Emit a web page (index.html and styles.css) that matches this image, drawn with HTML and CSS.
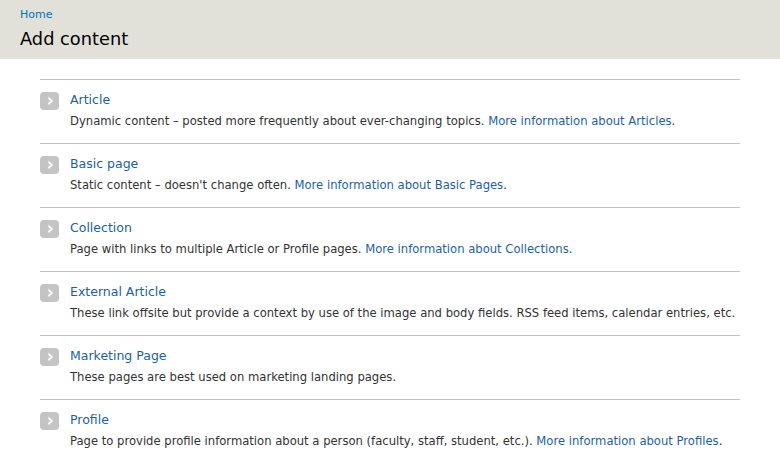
FILE: index.html
```html
<!DOCTYPE html>
<html>
<head>
<meta charset="utf-8">
<link rel="stylesheet" href="styles.css">
</head>
<body>
<header class="page-head">
  <a class="crumb" href="#">Home</a>
  <h1 class="title">Add content</h1>
</header>
<main class="content">
  <ul class="types">
    <li class="type">
      <span class="arrow"><svg width="8" height="10" viewBox="0 0 8 10"><path d="M2.5 1.8 L5.7 5 L2.5 8.2" fill="none" stroke="#fff" stroke-width="2"/></svg></span>
      <div class="info">
        <a class="name" href="#">Article</a>
        <p class="desc">Dynamic content – posted more frequently about ever-changing topics. <a href="#">More information about Articles</a>.</p>
      </div>
    </li>
    <li class="type">
      <span class="arrow"><svg width="8" height="10" viewBox="0 0 8 10"><path d="M2.5 1.8 L5.7 5 L2.5 8.2" fill="none" stroke="#fff" stroke-width="2"/></svg></span>
      <div class="info">
        <a class="name" href="#">Basic page</a>
        <p class="desc">Static content – doesn't change often. <a href="#">More information about Basic Pages</a>.</p>
      </div>
    </li>
    <li class="type">
      <span class="arrow"><svg width="8" height="10" viewBox="0 0 8 10"><path d="M2.5 1.8 L5.7 5 L2.5 8.2" fill="none" stroke="#fff" stroke-width="2"/></svg></span>
      <div class="info">
        <a class="name" href="#">Collection</a>
        <p class="desc">Page with links to multiple Article or Profile pages. <a href="#">More information about Collections</a>.</p>
      </div>
    </li>
    <li class="type">
      <span class="arrow"><svg width="8" height="10" viewBox="0 0 8 10"><path d="M2.5 1.8 L5.7 5 L2.5 8.2" fill="none" stroke="#fff" stroke-width="2"/></svg></span>
      <div class="info">
        <a class="name" href="#">External Article</a>
        <p class="desc">These link offsite but provide a context by use of the image and body fields. RSS feed items, calendar entries, etc.</p>
      </div>
    </li>
    <li class="type">
      <span class="arrow"><svg width="8" height="10" viewBox="0 0 8 10"><path d="M2.5 1.8 L5.7 5 L2.5 8.2" fill="none" stroke="#fff" stroke-width="2"/></svg></span>
      <div class="info">
        <a class="name" href="#">Marketing Page</a>
        <p class="desc">These pages are best used on marketing landing pages.</p>
      </div>
    </li>
    <li class="type">
      <span class="arrow"><svg width="8" height="10" viewBox="0 0 8 10"><path d="M2.5 1.8 L5.7 5 L2.5 8.2" fill="none" stroke="#fff" stroke-width="2"/></svg></span>
      <div class="info">
        <a class="name" href="#">Profile</a>
        <p class="desc">Page to provide profile information about a person (faculty, staff, student, etc.). <a href="#">More information about Profiles</a>.</p>
      </div>
    </li>
  </ul>
</main>
</body>
</html>
```
FILE: styles.css
```css
* { box-sizing: border-box; }
html, body { margin: 0; padding: 0; background: #fff; }
body {
  font-family: "DejaVu Sans", Verdana, sans-serif;
  color: #333;
  width: 780px;
  height: 465px;
  overflow: hidden;
}
a { color: #0074bd; text-decoration: none; }
.page-head {
  background: #e1e0d9;
  height: 59px;
  padding: 8px 20px 0;
}
.crumb {
  display: block;
  font-size: 11px;
  line-height: 13px;
  color: #0074bd;
}
.title {
  margin: 6px 0 0;
  font-size: 17.8px;
  font-weight: normal;
  color: #000;
  line-height: 24px;
}
.content { padding: 20px 40px 0; }
.types {
  list-style: none;
  margin: 0;
  padding: 0;
  border-top: 1px solid #bfbfbf;
}
.type {
  display: flex;
  gap: 11px;
  height: 64px;
  padding-top: 11px;
  border-bottom: 1px solid #bfbfbf;
}
.type:last-child { border-bottom: none; }
.arrow {
  width: 19px;
  height: 18px;
  margin-top: 1px;
  border-radius: 4px;
  background: #c4c4c4;
  display: flex;
  align-items: center;
  justify-content: center;
  flex: none;
}
.info { display: flex; flex-direction: column; min-width: 0; }
.name {
  font-size: 12.5px;
  line-height: 18px;
  color: #1c5fa8;
}
.desc {
  margin: 3px 0 0;
  font-size: 11.6px;
  line-height: 18px;
  color: #333;
  white-space: nowrap;
}
.desc a { color: #1c5fa8; }
```
